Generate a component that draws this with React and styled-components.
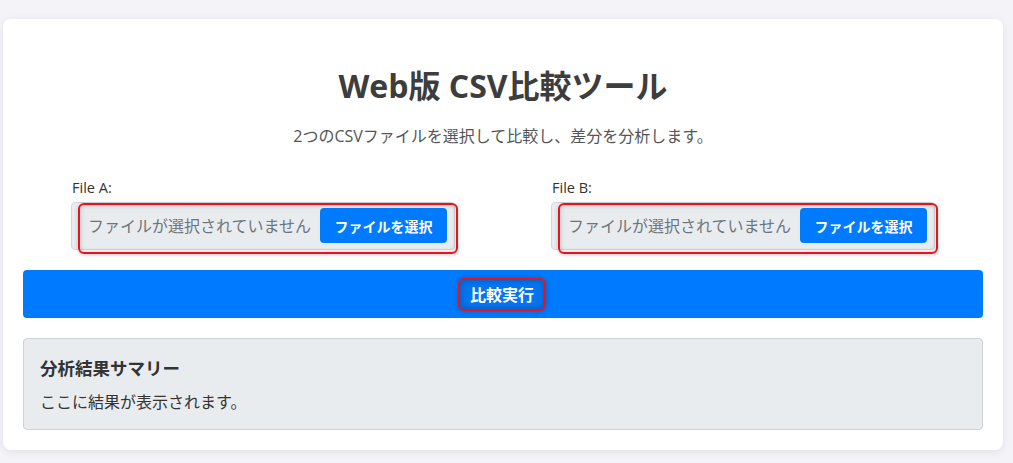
import React from "react";
import styled, { createGlobalStyle } from "styled-components";

const GlobalStyle = createGlobalStyle`
  * {
    box-sizing: border-box;
  }
  body {
    margin: 0;
    background-color: #f4f4f8;
    font-family: "Open Sans", "Noto Sans CJK JP", sans-serif;
    color: #333;
  }
`;

function FileField({ label }) {
  return (
    <FieldGroup>
      <FieldLabel>{label}</FieldLabel>
      <FileBox>
        <Highlight>
          <Placeholder>ファイルが選択されていません</Placeholder>
          <PickButton>ファイルを選択</PickButton>
        </Highlight>
      </FileBox>
    </FieldGroup>
  );
}

function App() {
  return (
    <>
      <GlobalStyle />
      <Page>
        <Card>
          <Title>Web版 CSV比較ツール</Title>
          <Subtitle>2つのCSVファイルを選択して比較し、差分を分析します。</Subtitle>
          <Columns>
            <Column>
              <FileField label="File A:" />
            </Column>
            <Column>
              <FileField label="File B:" />
            </Column>
          </Columns>
          <RunButton>
            <RunLabel>比較実行</RunLabel>
          </RunButton>
          <Summary>
            <SummaryTitle>分析結果サマリー</SummaryTitle>
            <SummaryText>ここに結果が表示されます。</SummaryText>
          </Summary>
        </Card>
      </Page>
    </>
  );
}

const Page = styled.div`
  padding: 19px 10px 13px 3px;
`;

const Card = styled.div`
  background-color: #fff;
  border-radius: 8px;
  box-shadow: 0 2px 8px rgba(0, 0, 0, 0.08);
  padding: 20px;
`;

const Title = styled.h1`
  margin: 28px 0 19px;
  text-align: center;
  font-size: 32px;
  line-height: 38px;
  font-weight: 700;
  color: #3d3d3d;
`;

const Subtitle = styled.p`
  margin: 0 0 29px;
  text-align: center;
  font-size: 16px;
  line-height: 24px;
  color: #555;
`;

const Columns = styled.div`
  display: grid;
  grid-template-columns: 1fr 1fr;
`;

const Column = styled.div`
  display: flex;
  justify-content: center;
`;

const FieldGroup = styled.div`
  width: 80%;
  display: flex;
  flex-direction: column;
`;

const FieldLabel = styled.label`
  font-size: 14.5px;
  line-height: 21px;
  margin-bottom: 4px;
  padding-left: 1px;
  color: #333;
`;

const FileBox = styled.div`
  height: 48px;
  background-color: #e9ecef;
  border: 1px solid #d3d7db;
  border-radius: 4px;
  padding: 0 0 0 6px;
  display: flex;
`;

const Highlight = styled.div`
  flex: 1;
  margin-right: -4px;
  height: 51px;
  border: 2px solid #e8141b;
  border-radius: 6px;
  box-shadow: inset 0 0 5px rgba(0, 0, 0, 0.22), 0 1px 4px rgba(0, 0, 0, 0.2);
  display: flex;
  align-items: flex-start;
  justify-content: space-between;
  padding: 3px 9px 0 8px;
`;

const Placeholder = styled.span`
  font-size: 16px;
  line-height: 36px;
  color: #6c757d;
  white-space: nowrap;
`;

const PickButton = styled.button`
  height: 35px;
  width: 127px;
  border: none;
  border-radius: 4px;
  background-color: #007bff;
  color: #fff;
  font-family: inherit;
  font-size: 14px;
  font-weight: 700;
  padding: 0;
`;

const RunButton = styled.button`
  display: flex;
  justify-content: center;
  align-items: center;
  width: 100%;
  height: 48px;
  margin-top: 20px;
  border: none;
  border-radius: 4px;
  background-color: #007bff;
  font-family: inherit;
  padding: 0;
`;

const RunLabel = styled.span`
  display: inline-flex;
  align-items: center;
  justify-content: center;
  width: 88px;
  height: 33px;
  margin-left: -2px;
  border: 2px solid #e8141b;
  border-radius: 6px;
  background-color: #0674ef;
  box-shadow: inset 0 0 6px rgba(0, 0, 0, 0.25), 0 0 6px rgba(0, 40, 120, 0.35);
  color: #fff;
  font-size: 16px;
  font-weight: 700;
`;

const Summary = styled.div`
  margin-top: 20px;
  height: 92px;
  background-color: #e9ecef;
  border: 1px solid #ced4da;
  border-radius: 4px;
  padding: 16px 16px 0;
`;

const SummaryTitle = styled.h3`
  margin: 0 0 9px;
  font-size: 17.5px;
  line-height: 26px;
  font-weight: 700;
  color: #333;
`;

const SummaryText = styled.p`
  margin: 0;
  font-size: 16px;
  line-height: 24px;
  color: #333;
`;

export default App;
